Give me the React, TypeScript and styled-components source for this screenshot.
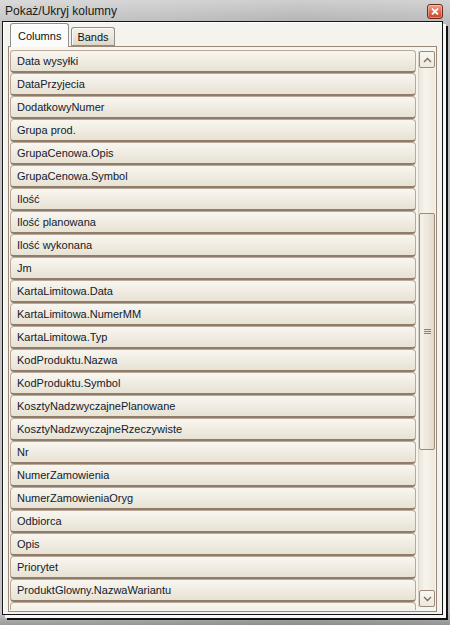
import React from "react";
import styled, { createGlobalStyle } from "styled-components";

const Global = createGlobalStyle`
  html, body { margin: 0; padding: 0; background: #a9a9a9; }
  body { font-family: "Liberation Sans", Arial, sans-serif; }
  * { box-sizing: border-box; }
`;

const Window = styled.div`
  width: 450px;
  height: 625px;
  display: flex;
  flex-direction: column;
  overflow: hidden;
  background:
    linear-gradient(180deg, rgba(255,255,255,0.35) 0px, rgba(255,255,255,0) 22px, rgba(0,0,0,0) 612px, rgba(0,0,0,0.22) 625px),
    linear-gradient(90deg, #c6c6c6 0px, #bfbfbf 150px, #b4b4b4 300px, #bcbcbc 450px);
  padding: 0 7px 10px 2px;
`;

const TitleBar = styled.div`
  height: 21px;
  flex: none;
  display: flex;
  align-items: center;
  justify-content: space-between;
  padding: 0 0 0 3px;
`;

const Title = styled.span`
  font-size: 12px;
  color: #1a1a1a;
  margin-top: 1px;
`;

const CloseButton = styled.div`
  width: 16px;
  height: 15px;
  margin-top: 2px;
  border: 1px solid #6b2a1e;
  border-radius: 3px;
  background: linear-gradient(180deg, #f0a58f 0%, #e0674b 50%, #c9442b 100%);
  display: flex;
  align-items: center;
  justify-content: center;
  box-shadow: inset 0 0 0 1px rgba(255,255,255,0.35);
`;

const Client = styled.div`
  flex: 1;
  min-height: 0;
  display: flex;
  flex-direction: column;
  border: 1px solid #151515;
  background: #f4f3ee;
  box-shadow: inset 1px 1px 0 #ffffff, 3px 3px 0 #f7f7f7, 5px 5px 0 #111111;
  padding: 1px 5px 2px 5px;
`;

const TabStrip = styled.div`
  display: flex;
  align-items: flex-end;
  padding-left: 2px;
  height: 23px;
  flex: none;
  position: relative;
  z-index: 1;
`;

const Tab = styled.div<{ $active?: boolean }>`
  height: ${(p) => (p.$active ? 24 : 19)}px;
  padding: 0 ${(p) => (p.$active ? 7 : 5)}px;
  margin-right: 2px;
  border: 1px solid #8e8f8f;
  border-bottom: ${(p) => (p.$active ? "none" : "1px solid #9a8878")};
  border-radius: 3px 3px 0 0;
  font-size: 11px;
  color: #111;
  display: flex;
  align-items: center;
  padding-top: ${(p) => (p.$active ? 0 : 1)}px;
  background: ${(p) =>
    p.$active
      ? "#fbfbf9"
      : "linear-gradient(180deg, #f3f1ea 0%, #e9e5da 60%, #ddd7c8 100%)"};
  margin-bottom: ${(p) => (p.$active ? -1 : 0)}px;
  box-shadow: ${(p) => (p.$active ? "inset 1px 1px 0 #fff" : "inset 1px 1px 0 #fbfaf6")};
`;

const Panel = styled.div`
  flex: 1;
  min-height: 0;
  display: flex;
  border: 1px solid #9a8878;
  background: #f7f5f0;
  padding: 3px 1px 1px 1px;
`;

const List = styled.div`
  flex: 1;
  min-height: 0;
  display: flex;
  flex-direction: column;
  overflow: hidden;
  background: #f3efe6;
`;

const Row = styled.div`
  height: 23px;
  flex: none;
  display: flex;
  align-items: center;
  padding-left: 6px;
  font-size: 11px;
  color: #12202c;
  border: 1px solid #b9a898;
  border-bottom: 2px solid #8f7c6b;
  border-radius: 4px;
  background: linear-gradient(180deg, #f8f6f0 0%, #f0ece2 50%, #e8e2d4 100%);
  white-space: nowrap;
`;

const ScrollBar = styled.div`
  width: 17px;
  flex: none;
  margin: 1px 0 3px 2px;
  display: flex;
  flex-direction: column;
  background: linear-gradient(90deg, #ece6da 0%, #f7f4ee 40%, #efe9de 100%);
  border-left: 1px solid #d9d1c3;
`;

const ScrollButton = styled.div`
  height: 17px;
  flex: none;
  border: 1px solid #9c8979;
  border-radius: 2px;
  background: linear-gradient(180deg, #f9f7f2 0%, #eee8dc 100%);
  display: flex;
  align-items: center;
  justify-content: center;
`;

const Track = styled.div`
  flex: 1;
  min-height: 0;
  display: flex;
  flex-direction: column;
`;

const Thumb = styled.div<{ $top: number; $height: number }>`
  margin-top: ${(p) => p.$top}px;
  height: ${(p) => p.$height}px;
  flex: none;
  border: 1px solid #9c8979;
  border-radius: 2px;
  background: linear-gradient(90deg, #f6f3ec 0%, #ece6da 60%, #e2dacb 100%);
  display: flex;
  align-items: center;
  justify-content: center;
`;

const Grip = styled.div`
  width: 7px;
  display: flex;
  flex-direction: column;
  gap: 1px;
  & > span {
    display: block;
    height: 1px;
    background: #8d7d70;
  }
`;

const columns = [
  "Data wysyłki",
  "DataPrzyjecia",
  "DodatkowyNumer",
  "Grupa prod.",
  "GrupaCenowa.Opis",
  "GrupaCenowa.Symbol",
  "Ilość",
  "Ilość planowana",
  "Ilość wykonana",
  "Jm",
  "KartaLimitowa.Data",
  "KartaLimitowa.NumerMM",
  "KartaLimitowa.Typ",
  "KodProduktu.Nazwa",
  "KodProduktu.Symbol",
  "KosztyNadzwyczajnePlanowane",
  "KosztyNadzwyczajneRzeczywiste",
  "Nr",
  "NumerZamowienia",
  "NumerZamowieniaOryg",
  "Odbiorca",
  "Opis",
  "Priorytet",
  "ProduktGlowny.NazwaWariantu",
  "",
];

const Chevron = ({ up }: { up?: boolean }) => (
  <svg width="9" height="6" viewBox="0 0 9 6">
    <path
      d={up ? "M1 5 L4.5 1.5 L8 5" : "M1 1 L4.5 4.5 L8 1"}
      fill="none"
      stroke="#7b6b5f"
      strokeWidth="1.3"
    />
  </svg>
);

export default function App() {
  return (
    <>
      <Global />
      <Window>
        <TitleBar>
          <Title>Pokaż/Ukryj kolumny</Title>
          <CloseButton>
            <svg width="8" height="7" viewBox="0 0 8 7">
              <path d="M1 0.5 L7 6.5 M7 0.5 L1 6.5" stroke="#fff" strokeWidth="1.8" />
            </svg>
          </CloseButton>
        </TitleBar>
        <Client>
          <TabStrip>
            <Tab $active>Columns</Tab>
            <Tab>Bands</Tab>
          </TabStrip>
          <Panel>
            <List>
              {columns.map((c, i) => (
                <Row key={i}>{c}</Row>
              ))}
            </List>
            <ScrollBar>
              <ScrollButton>
                <Chevron up />
              </ScrollButton>
              <Track>
                <Thumb $top={145} $height={237}>
                  <Grip>
                    <span />
                    <span />
                    <span />
                  </Grip>
                </Thumb>
              </Track>
              <ScrollButton>
                <Chevron />
              </ScrollButton>
            </ScrollBar>
          </Panel>
        </Client>
      </Window>
    </>
  );
}
